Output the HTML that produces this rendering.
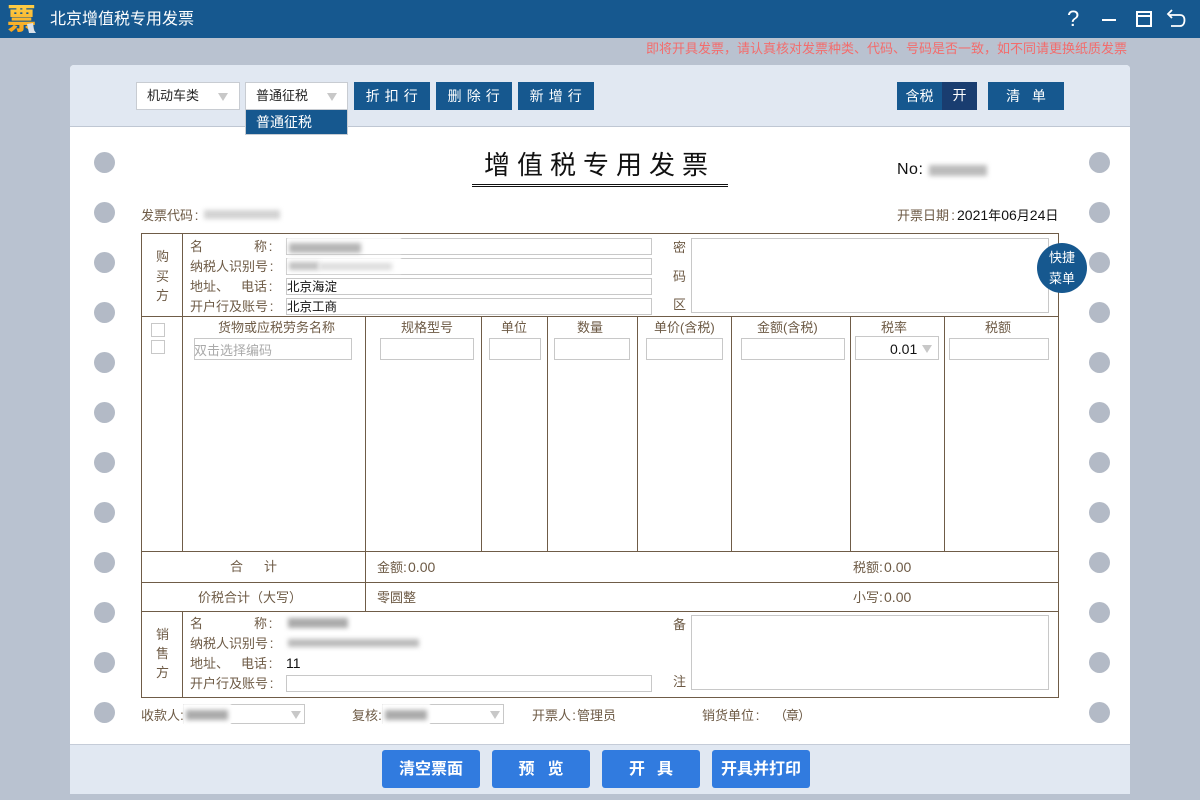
<!DOCTYPE html>
<html lang="zh"><head><meta charset="utf-8"><title>北京增值税专用发票</title>
<style>
*{box-sizing:border-box}
html,body{margin:0;padding:0;width:1200px;height:800px;overflow:hidden}
body{background:#b9c2d0;font-family:"Liberation Sans","Noto Sans CJK SC",sans-serif;font-size:13px;color:#6d5a45;position:relative}
div,span{position:absolute;white-space:nowrap}
i{font-style:normal;display:inline-block;width:7px;text-align:center;font-size:14px}
i.s{width:5px;text-align:left}
i.w{width:8px}
i.m{width:6px}
b{font-weight:normal;font-size:14px}
.t{line-height:18px}
.hl{background:#6f5c47;height:1px}
.vl{background:#6f5c47;width:1px}
.in{border:1px solid #c8c8c8;background:#fff}
.dot{width:21px;height:21px;border-radius:50%;background:#b3bac6}
.btn{background:#16588f;color:#fff;text-align:center;height:28px;line-height:28px;font-size:14px;top:82px}
.sel{background:#fff;border:1px solid #c8ccd2;height:28px;top:82px;color:#222;line-height:26px;padding-left:10px}
.tri{width:0;height:0;border-left:5.5px solid transparent;border-right:5.5px solid transparent;border-top:8px solid #c8c8c8}
.fb{background:#317bdf;color:#fff;top:750px;height:38px;line-height:39px;text-align:center;font-size:16px;font-weight:bold;border-radius:3px;width:98px}
.cv{background:#fff;filter:blur(.5px)}
.bar{filter:blur(2.5px)}
</style></head><body>
<div style="left:0;top:0;width:1200px;height:38px;background:#16588f"></div>
<div style="left:7px;top:1px;width:32px;font-size:29px;line-height:38px;font-weight:900;color:#fbae1c;background:linear-gradient(#ffd34d,#f59a12);-webkit-background-clip:text;background-clip:text;-webkit-text-fill-color:transparent">票</div>
<svg style="position:absolute;left:26px;top:23px" width="11" height="11" viewBox="0 0 11 11"><path d="M1 1 L7 0 L8 7 L10 10 L3 10 Z" fill="#d9e1ea"/></svg>
<div style="left:50px;top:10px;font-size:16px;line-height:20px;color:#fff">北京增值税专用发票</div>
<div style="left:1067px;top:6px;font-size:22px;line-height:26px;color:#fff">?</div>
<div style="left:1102px;top:19px;width:14px;height:2px;background:#fff"></div>
<div style="left:1136px;top:11px;width:16px;height:16px;border:2px solid #fff"></div>
<div style="left:1137px;top:15px;width:14px;height:2px;background:#fff"></div>
<svg style="position:absolute;left:1166px;top:9px" width="20" height="20" viewBox="0 0 20 20"><path d="M6 1 L2 5 L6 9 M3 6 H14 C17 6 18.5 8 18.5 11 C18.5 15 16.5 17 14 17 H5" fill="none" stroke="#fff" stroke-width="1.8"/></svg>
<div style="right:73px;top:40px;font-size:13px;line-height:18px;color:#f36c6c">即将开具发票，请认真核对发票种类、代码、号码是否一致，如不同请更换纸质发票</div>

<div style="left:70px;top:65px;width:1060px;height:729px;background:#fff;border-radius:4px 4px 0 0;overflow:hidden"></div>
<div style="left:70px;top:65px;width:1060px;height:62px;background:#e1e8f2;border-bottom:1px solid #bfc7d3;border-radius:4px 4px 0 0"></div>
<div style="left:70px;top:744px;width:1060px;height:50px;background:#e1e8f2;border-top:1px solid #c5ccd8"></div>

<div class="sel" style="left:136px;width:104px">机动车类</div><div class="tri" style="left:218px;top:93px"></div>
<div class="sel" style="left:245px;width:103px">普通征税</div><div class="tri" style="left:327px;top:93px"></div>
<div style="left:245px;top:109px;width:103px;height:26px;background:#16588f;border:1px solid #c8ccd2;color:#fff;line-height:25px;padding-left:10px;font-size:14px">普通征税</div>
<div class="btn" style="left:354px;width:76px;letter-spacing:.6px">折 扣 行</div>
<div class="btn" style="left:436px;width:76px;letter-spacing:.6px">删 除 行</div>
<div class="btn" style="left:518px;width:76px;letter-spacing:.6px">新 增 行</div>
<div class="btn" style="left:897px;width:45px">含税</div>
<div class="btn" style="left:942px;width:35px;background:#193d70;line-height:26px">开</div>
<div class="btn" style="left:988px;width:76px;word-spacing:2px">清 &nbsp;单</div>

<div class="dot" style="left:94px;top:152px"></div><div class="dot" style="left:94px;top:202px"></div><div class="dot" style="left:94px;top:252px"></div><div class="dot" style="left:94px;top:302px"></div><div class="dot" style="left:94px;top:352px"></div><div class="dot" style="left:94px;top:402px"></div><div class="dot" style="left:94px;top:452px"></div><div class="dot" style="left:94px;top:502px"></div><div class="dot" style="left:94px;top:552px"></div><div class="dot" style="left:94px;top:602px"></div><div class="dot" style="left:94px;top:652px"></div><div class="dot" style="left:94px;top:702px"></div>
<div class="dot" style="left:1089px;top:152px"></div><div class="dot" style="left:1089px;top:202px"></div><div class="dot" style="left:1089px;top:252px"></div><div class="dot" style="left:1089px;top:302px"></div><div class="dot" style="left:1089px;top:352px"></div><div class="dot" style="left:1089px;top:402px"></div><div class="dot" style="left:1089px;top:452px"></div><div class="dot" style="left:1089px;top:502px"></div><div class="dot" style="left:1089px;top:552px"></div><div class="dot" style="left:1089px;top:602px"></div><div class="dot" style="left:1089px;top:652px"></div><div class="dot" style="left:1089px;top:702px"></div>

<div style="left:484px;top:148px;font-size:26px;line-height:34px;letter-spacing:7px;color:#111">增值税专用发票</div>
<div style="left:472px;top:184px;width:256px;height:3px;border-top:1px solid #111;border-bottom:1px solid #111"></div>
<div style="left:897px;top:160px;font-size:16px;line-height:20px;color:#111;letter-spacing:.5px">No:</div>
<div class="bar" style="left:929px;top:165px;width:58px;height:11px;background:#bbb"></div>

<div class="t" style="left:141px;top:206px">发票代码<i>:</i></div>
<div class="bar" style="left:204px;top:210px;width:76px;height:9px;background:#d2d2d2"></div>
<div class="t" style="left:897px;top:206px">开票日期<i class="w">:</i><b style="color:#111">2021</b><span style="position:static;color:#111">年</span><b style="color:#111">06</b><span style="position:static;color:#111">月</span><b style="color:#111">24</b><span style="position:static;color:#111">日</span></div>

<div style="left:141px;top:233px;width:918px;height:465px;border:1px solid #6f5c47"></div>
<div class="hl" style="left:141px;top:316px;width:918px"></div>
<div class="hl" style="left:141px;top:551px;width:918px"></div>
<div class="hl" style="left:141px;top:582px;width:918px"></div>
<div class="hl" style="left:141px;top:611px;width:918px"></div>
<div class="vl" style="left:182px;top:233px;height:318px"></div>
<div class="vl" style="left:182px;top:611px;height:86px"></div>
<div class="vl" style="left:365px;top:316px;height:295px"></div>
<div class="vl" style="left:481px;top:316px;height:235px"></div>
<div class="vl" style="left:547px;top:316px;height:235px"></div>
<div class="vl" style="left:637px;top:316px;height:235px"></div>
<div class="vl" style="left:731px;top:316px;height:235px"></div>
<div class="vl" style="left:850px;top:316px;height:235px"></div>
<div class="vl" style="left:944px;top:316px;height:235px"></div>

<div class="t" style="left:156px;top:248px">购</div><div class="t" style="left:156px;top:268px">买</div><div class="t" style="left:156px;top:287px">方</div>
<div class="t" style="left:190px;top:238px">名</div><div class="t" style="left:254px;top:237px">称<i>:</i></div>
<div class="t" style="left:190px;top:257px">纳税人识别号<i>:</i></div>
<div class="t" style="left:190px;top:278px">地址、</div><div class="t" style="left:241px;top:277px">电话<i>:</i></div>
<div class="t" style="left:190px;top:297px">开户行及账号<i>:</i></div>
<div class="in" style="left:286px;top:238px;width:366px;height:17px"></div>
<div class="in" style="left:286px;top:258px;width:366px;height:17px"></div>
<div class="in" style="left:286px;top:278px;width:366px;height:17px;line-height:16px;color:#111;font-size:12.5px">北京海淀</div>
<div class="in" style="left:286px;top:298px;width:366px;height:17px;line-height:16px;color:#111;font-size:12.5px">北京工商</div>
<div class="cv" style="left:287px;top:238px;width:114px;height:16px"></div>
<div class="cv" style="left:287px;top:258px;width:114px;height:16px"></div>
<div class="bar" style="left:289px;top:243px;width:72px;height:10px;background:#b5b5b5"></div>
<div class="bar" style="left:289px;top:262px;width:30px;height:8px;background:#c0c0c0"></div>
<div class="bar" style="left:319px;top:263px;width:73px;height:7px;background:#dcdcdc"></div>
<div class="t" style="left:673px;top:239px">密</div><div class="t" style="left:673px;top:268px">码</div><div class="t" style="left:673px;top:296px">区</div>
<div class="in" style="left:691px;top:238px;width:358px;height:75px"></div>
<div style="left:1037px;top:243px;width:50px;height:50px;border-radius:50%;background:#16588f;color:#fff;text-align:center;line-height:21px;padding-top:4px;white-space:normal">快捷<br>菜单</div>

<div class="in" style="left:151px;top:323px;width:14px;height:14px"></div>
<div class="in" style="left:151px;top:340px;width:14px;height:14px"></div>
<div class="t" style="left:218px;top:319px">货物或应税劳务名称</div>
<div class="t" style="left:401px;top:319px">规格型号</div>
<div class="t" style="left:501px;top:319px">单位</div>
<div class="t" style="left:577px;top:319px">数量</div>
<div class="t" style="left:654px;top:319px">单价(含税)</div>
<div class="t" style="left:757px;top:319px">金额(含税)</div>
<div class="t" style="left:881px;top:319px">税率</div>
<div class="t" style="left:985px;top:319px">税额</div>
<div class="in" style="left:194px;top:338px;width:158px;height:22px;color:#aaa;line-height:23px;text-indent:-1px">双击选择编码</div>
<div class="in" style="left:380px;top:338px;width:94px;height:22px"></div>
<div class="in" style="left:489px;top:338px;width:52px;height:22px"></div>
<div class="in" style="left:554px;top:338px;width:76px;height:22px"></div>
<div class="in" style="left:646px;top:338px;width:77px;height:22px"></div>
<div class="in" style="left:741px;top:338px;width:104px;height:22px"></div>
<div class="in" style="left:855px;top:336px;width:84px;height:24px;color:#111;line-height:24px;padding-left:34px;font-size:14px">0.01</div>
<div class="tri" style="left:922px;top:345px"></div>
<div class="in" style="left:949px;top:338px;width:100px;height:22px"></div>

<div class="t" style="left:230px;top:558px">合</div><div class="t" style="left:264px;top:558px">计</div>
<div class="t" style="left:377px;top:558px">金额<i class="s">:</i><b>0.00</b></div>
<div class="t" style="left:853px;top:558px">税额<i class="s">:</i><b>0.00</b></div>
<div class="t" style="left:198px;top:589px">价税合计（大写）</div>
<div class="t" style="left:377px;top:589px">零圆整</div>
<div class="t" style="left:853px;top:588px">小写<i class="s">:</i><b>0.00</b></div>

<div class="t" style="left:156px;top:626px">销</div><div class="t" style="left:156px;top:645px">售</div><div class="t" style="left:156px;top:664px">方</div>
<div class="t" style="left:190px;top:615px">名</div><div class="t" style="left:254px;top:614px">称<i>:</i></div>
<div class="t" style="left:190px;top:634px">纳税人识别号<i>:</i></div>
<div class="t" style="left:190px;top:655px">地址、</div><div class="t" style="left:241px;top:654px">电话<i>:</i></div>
<div class="t" style="left:286px;top:654px;color:#111;font-size:14px">11</div>
<div class="t" style="left:190px;top:674px">开户行及账号<i>:</i></div>
<div class="bar" style="left:288px;top:618px;width:60px;height:10px;background:#aaa"></div>
<div class="bar" style="left:288px;top:639px;width:131px;height:8px;background:#bbb"></div>
<div class="in" style="left:286px;top:675px;width:366px;height:17px"></div>
<div class="t" style="left:673px;top:616px">备</div><div class="t" style="left:673px;top:673px">注</div>
<div class="in" style="left:691px;top:615px;width:358px;height:75px"></div>

<div class="t" style="left:141px;top:706px">收款人<i class="s">:</i></div>
<div class="in" style="left:183px;top:704px;width:122px;height:20px"></div><div class="tri" style="left:291px;top:711px"></div>
<div class="cv" style="left:183px;top:704px;width:48px;height:22px"></div>
<div class="bar" style="left:186px;top:710px;width:42px;height:10px;background:#aaa"></div>
<div class="t" style="left:352px;top:706px">复核<i class="s">:</i></div>
<div class="in" style="left:382px;top:704px;width:122px;height:20px"></div><div class="tri" style="left:490px;top:711px"></div>
<div class="cv" style="left:382px;top:704px;width:48px;height:22px"></div>
<div class="bar" style="left:385px;top:710px;width:42px;height:10px;background:#aaa"></div>
<div class="t" style="left:532px;top:706px">开票人<i class="m">:</i>管理员</div>
<div class="t" style="left:702px;top:706px">销货单位<i>:</i></div>
<div class="t" style="left:774px;top:707px;letter-spacing:-1px">（章）</div>

<div class="fb" style="left:382px">清空票面</div>
<div class="fb" style="left:492px;word-spacing:2px">预 &nbsp;览</div>
<div class="fb" style="left:602px;word-spacing:1.5px">开 &nbsp;具</div>
<div class="fb" style="left:712px">开具并打印</div>
</body></html>
